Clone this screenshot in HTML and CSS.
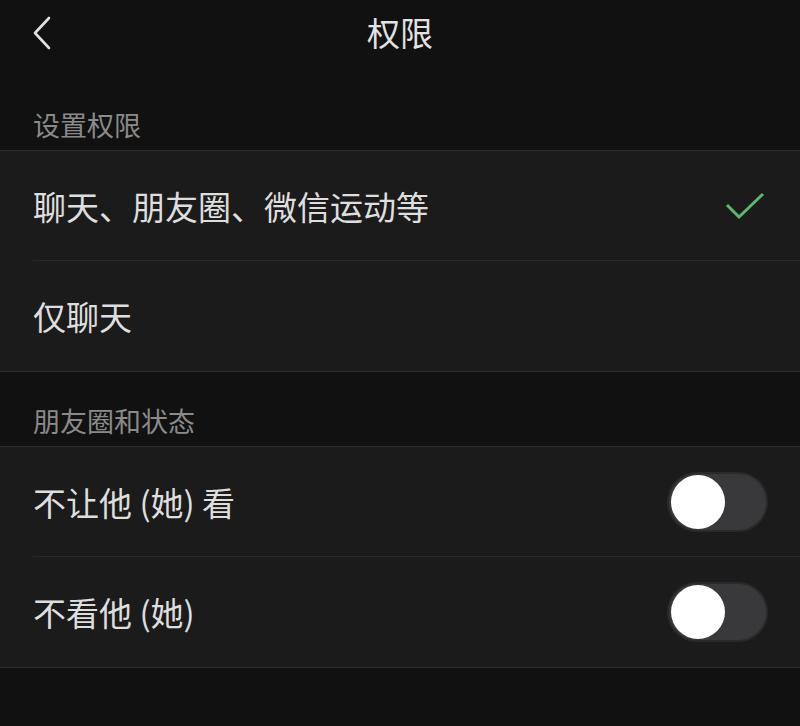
FILE: index.html
```html
<!DOCTYPE html>
<html lang="zh-CN">
<head>
<meta charset="utf-8">
<title>权限</title>
<link rel="stylesheet" href="styles.css">
</head>
<body>
<div class="nav">
  <svg class="back" viewBox="0 0 22 34" width="22" height="34"><path d="M18 2 L4 17 L18 32" fill="none" stroke="#e0e0e0" stroke-width="2.6" stroke-linecap="round" stroke-linejoin="round"/></svg>
  <div class="nav-title">权限</div>
</div>

<div class="section-title first">设置权限</div>
<div class="group">
  <div class="row">
    <div class="row-inner">
      <span class="label">聊天、朋友圈、微信运动等</span>
      <svg class="check" viewBox="0 0 40 30" width="40" height="30"><path d="M2 14 L14 26 L38 3" fill="none" stroke="#5cb86c" stroke-width="3"/></svg>
    </div>
  </div>
  <div class="row">
    <div class="row-inner last">
      <span class="label">仅聊天</span>
    </div>
  </div>
</div>

<div class="section-title">朋友圈和状态</div>
<div class="group">
  <div class="row">
    <div class="row-inner">
      <span class="label">不让他 (她) 看</span>
      <div class="toggle"><div class="knob"></div></div>
    </div>
  </div>
  <div class="row">
    <div class="row-inner last">
      <span class="label">不看他 (她)</span>
      <div class="toggle"><div class="knob"></div></div>
    </div>
  </div>
</div>
</body>
</html>
```
FILE: styles.css
```css
html, body {
  margin: 0;
  padding: 0;
  background: #111111;
  font-family: "Noto Sans CJK SC", "Noto Sans", sans-serif;
  color: #dcdcdc;
}
.nav {
  position: relative;
  height: 66px;
  display: flex;
  align-items: center;
  justify-content: center;
}
.back {
  position: absolute;
  left: 31px;
  top: 16px;
}
.nav-title {
  font-size: 33px;
  line-height: 40px;
  margin-top: -3px;
  color: #e2e2e2;
  font-weight: 400;
}
.section-title {
  height: 74px;
  box-sizing: border-box;
  padding: 0 33px 7px;
  display: flex;
  align-items: flex-end;
  font-size: 27px;
  line-height: 36px;
  color: #8a8a8a;
}
.section-title.first {
  height: 84px;
}
.group {
  background: #1b1b1b;
  border-top: 1px solid #2c2c2c;
  border-bottom: 1px solid #2c2c2c;
}
.row {
  padding-left: 33px;
}
.row-inner {
  height: 110px;
  box-sizing: border-box;
  border-bottom: 1px solid #292929;
  display: flex;
  align-items: center;
  justify-content: space-between;
  padding-right: 32px;
}
.row-inner.last {
  border-bottom: none;
}
.label {
  font-size: 33px;
  line-height: 40px;
  color: #dedede;
}
.check {
  margin-right: 3px;
}
.toggle {
  width: 101px;
  height: 60px;
  box-sizing: border-box;
  border-radius: 30px;
  background: #39393c;
  border: 2px solid #2a2a2c;
  display: flex;
  align-items: center;
  padding-left: 2px;
}
.knob {
  width: 54px;
  height: 54px;
  border-radius: 50%;
  background: #ffffff;
}
```
